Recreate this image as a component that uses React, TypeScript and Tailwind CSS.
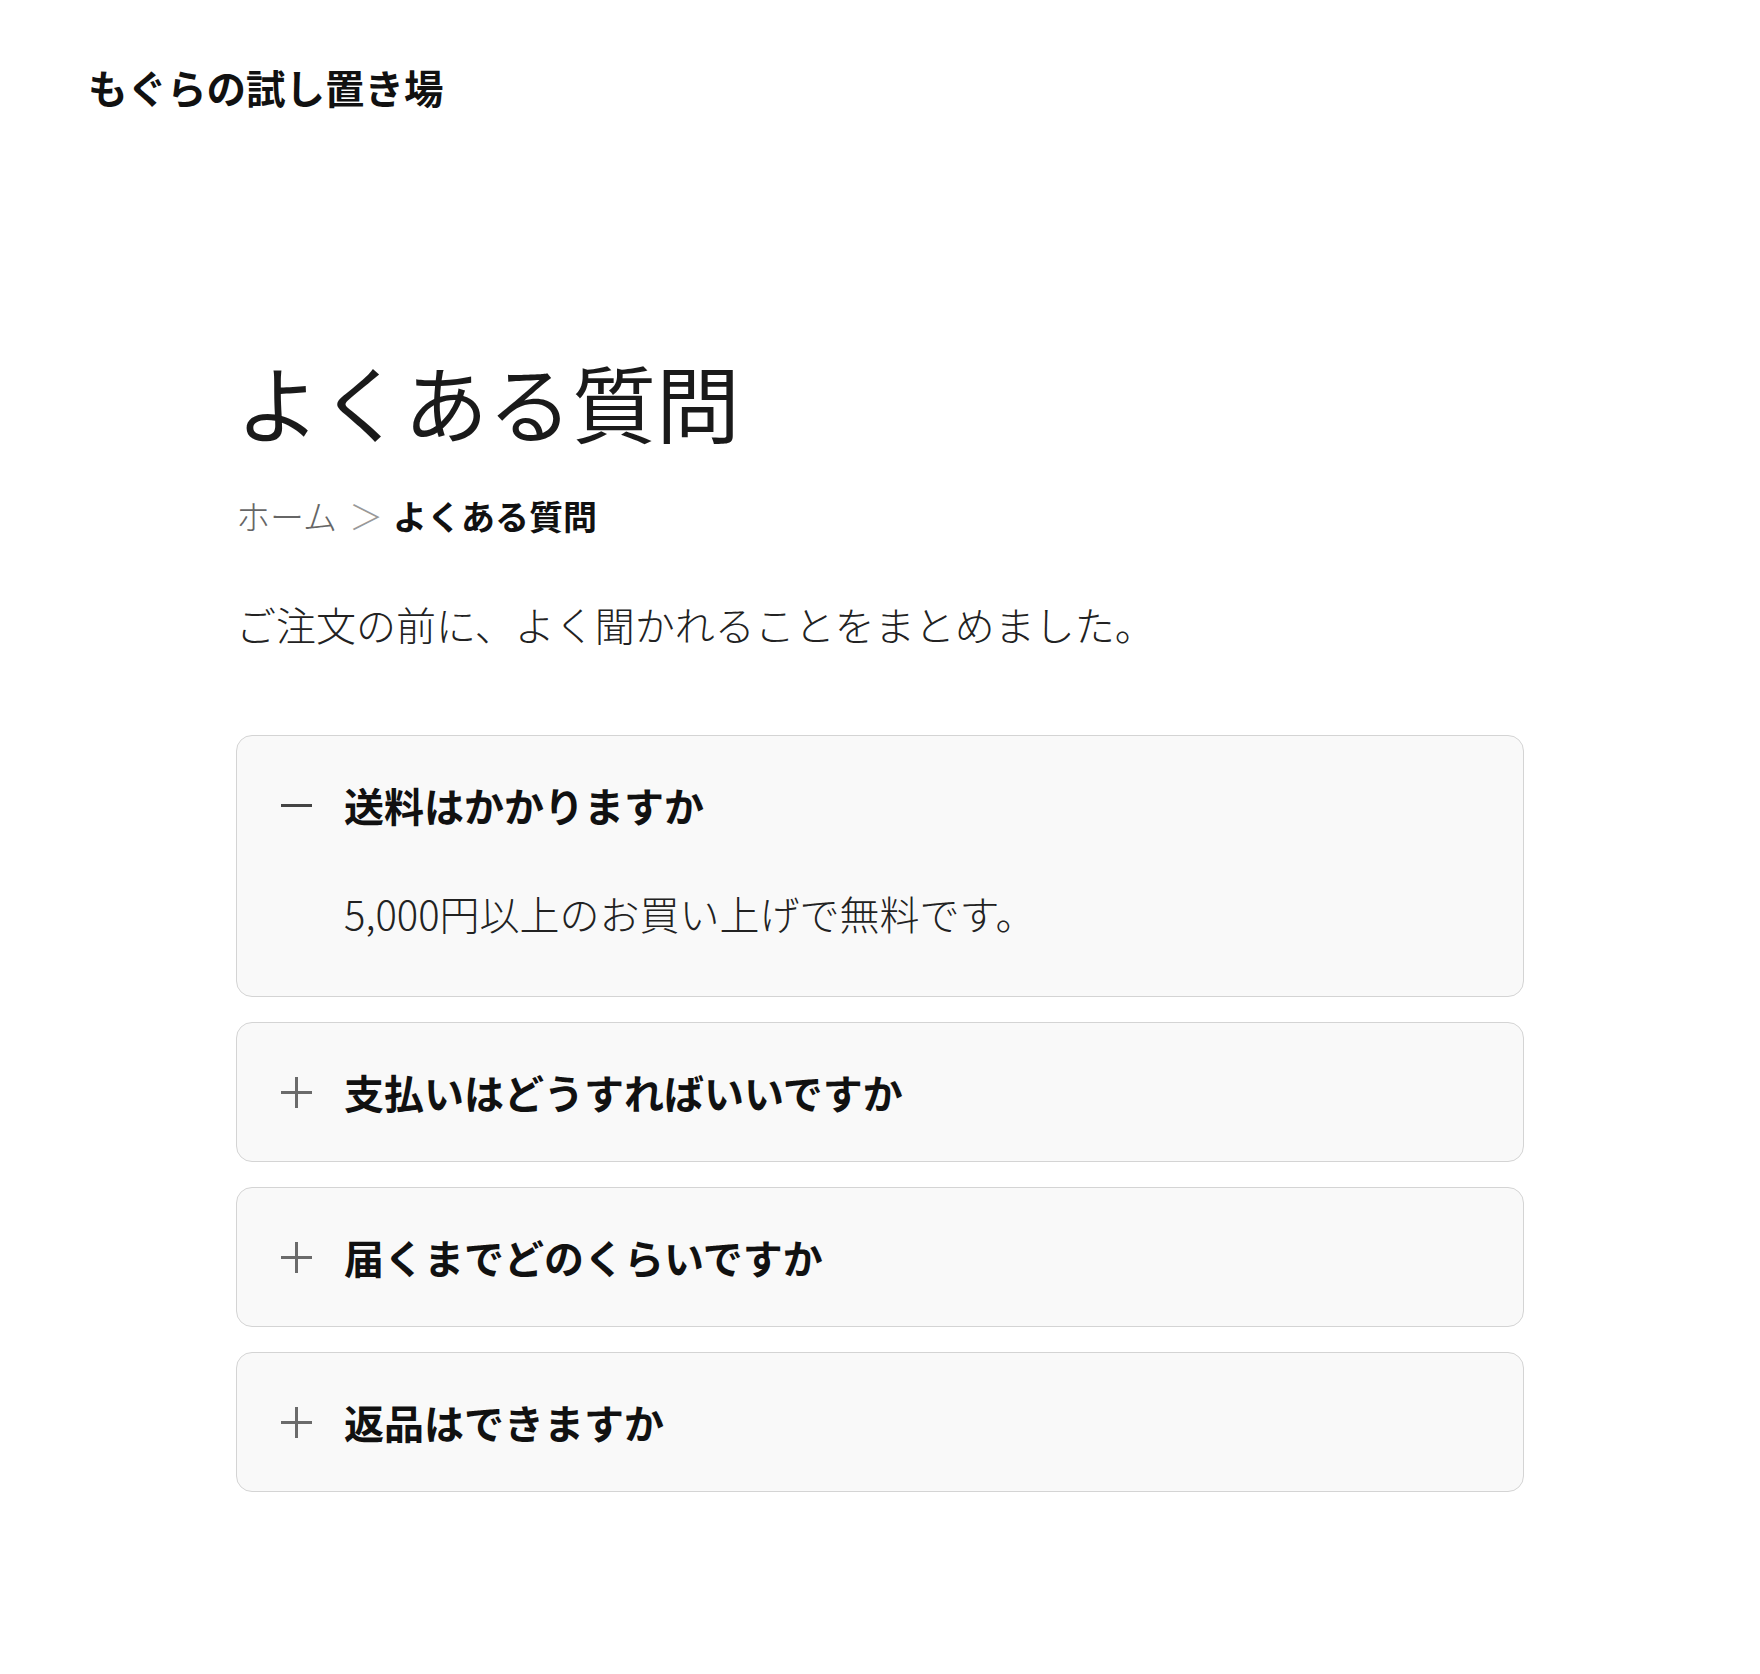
import { useState } from 'react'

const faqs = [
  { q: '送料はかかりますか', a: '5,000円以上のお買い上げで無料です。' },
  { q: '支払いはどうすればいいですか', a: 'クレジットカード、銀行振込、代金引換がご利用いただけます。' },
  { q: '届くまでどのくらいですか', a: 'ご注文から3〜5営業日ほどでお届けします。' },
  { q: '返品はできますか', a: '商品到着後7日以内であれば返品を承ります。' },
]

function ToggleIcon({ open }: { open: boolean }) {
  return (
    <svg width="31" height="31" viewBox="0 0 31 31" className="shrink-0">
      <rect x="0" y="14" width="31" height="3" fill={open ? '#444444' : '#6b6b6b'} />
      {!open && <rect x="14" y="0" width="3" height="31" fill="#6b6b6b" />}
    </svg>
  )
}

export default function App() {
  const [openIndex, setOpenIndex] = useState<number | null>(0)

  return (
    <div className="min-h-[1674px] bg-white text-[#1a1a1a] font-['Noto_Sans_CJK_JP','Noto_Sans',sans-serif]">
      {/* Site header */}
      <header className="px-[88px] pt-[58px]">
        <div className="text-[39.5px] leading-[58px] font-bold text-[#111]">もぐらの試し置き場</div>
      </header>

      <main className="mx-auto w-[1288px] pt-[235px] pb-[120px]">
        <h1 className="text-[84px] leading-[100px] font-normal text-[#1a1a1a]">よくある質問</h1>

        {/* Breadcrumb */}
        <nav className="mt-[39px] flex items-center text-[34px] leading-[51px]">
          <span className="font-light text-[#666]">ホーム</span>
          <span className="ml-[12px] mr-[10px] font-light text-[#999]">＞</span>
          <span className="font-bold text-[#111]">よくある質問</span>
        </nav>

        <p className="mt-[53px] text-[40px] leading-[60px] font-light text-[#222]">
          ご注文の前に、よく聞かれることをまとめました。
        </p>

        <div className="mt-[81px] flex flex-col gap-[25px]">
          {faqs.map((item, i) => {
            const open = openIndex === i
            return (
              <div key={i} className="rounded-[16px] border border-[#d4d4d4] bg-[#f9f9f9]">
                <button
                  onClick={() => setOpenIndex(open ? null : i)}
                  className="flex h-[138px] w-full items-center pl-[44px] text-left"
                >
                  <ToggleIcon open={open} />
                  <span className="ml-[32px] text-[40px] leading-[60px] font-bold text-[#111]">{item.q}</span>
                </button>
                {open && (
                  <div className="pl-[107px] pt-[9px] pb-[53px] text-[40px] leading-[60px] font-light text-[#222]">
                    {item.a}
                  </div>
                )}
              </div>
            )
          })}
        </div>
      </main>
    </div>
  )
}
